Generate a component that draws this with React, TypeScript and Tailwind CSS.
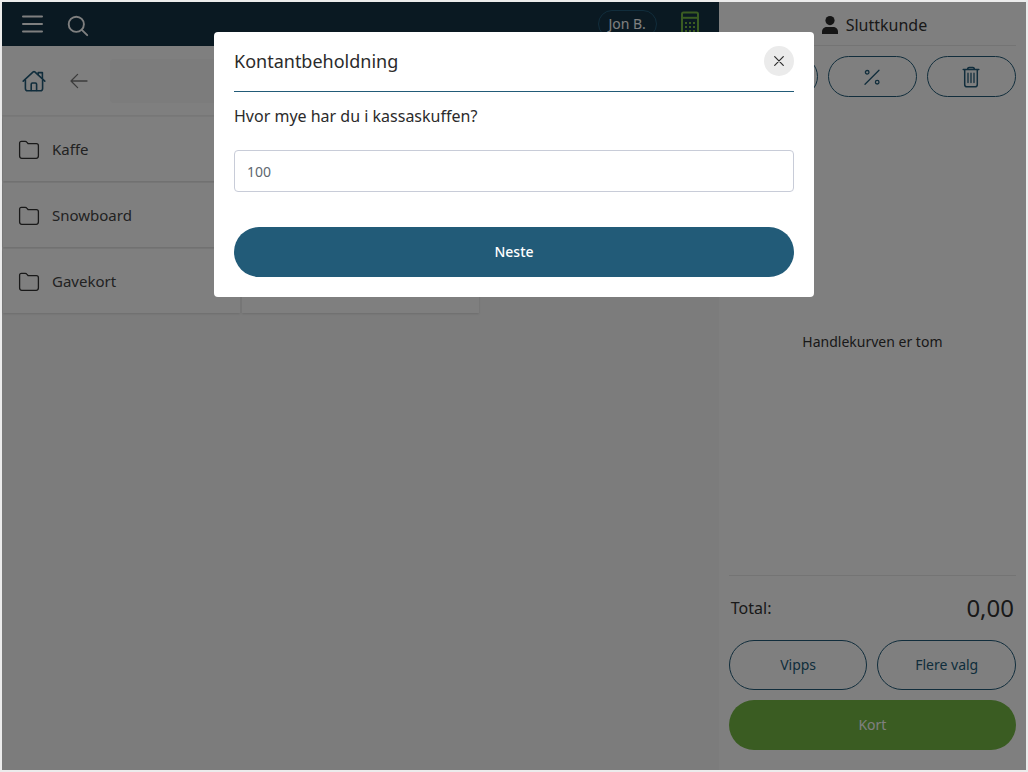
import { useState, type ReactNode } from 'react';

const folders = ['Kaffe', 'Snowboard', 'Gavekort'];

function FolderIcon() {
  return (
    <svg width="22" height="20" viewBox="0 0 22 20" fill="none" stroke="currentColor" strokeWidth="1.3" strokeLinejoin="round" aria-hidden="true">
      <path d="M1.6 3.2C1.6 2 2.2 1.4 3.4 1.4H7.3C8 1.4 8.4 1.6 8.8 2.1L10.2 3.7H18.4C19.8 3.7 20.4 4.4 20.4 5.7V15.8C20.4 17.5 19.7 18.3 18.2 18.3H3.8C2.3 18.3 1.6 17.5 1.6 15.8Z" />
    </svg>
  );
}

function HomeIcon() {
  return (
    <svg width="24" height="22" viewBox="0 0 24 22" fill="none" stroke="currentColor" strokeWidth="1.6" strokeLinecap="round" strokeLinejoin="round" aria-hidden="true">
      <path d="M1.2 11.2L11.2 1.9Q12 1.3 12.8 1.9L22.8 11.2" />
      <path d="M3.4 10V18.4Q3.4 20.7 5.6 20.7H18.4Q20.6 20.7 20.6 18.4V10" />
      <path d="M9.2 20.5V14.2Q9.2 13 10.4 13H13.4Q14.6 13 14.6 14.2V20.5" />
      <path d="M16.2 4.4V2.6H20.4V8.4" />
    </svg>
  );
}

function TrashIcon() {
  return (
    <svg width="18" height="22" viewBox="0 0 18 22" fill="none" stroke="currentColor" strokeWidth="1.5" strokeLinecap="round" strokeLinejoin="round" aria-hidden="true">
      <path d="M1.2 3.6H16.8M2.7 3.8V18.4Q2.7 20.8 5 20.8H13Q15.3 20.8 15.3 18.4V3.8M5.6 3.4Q5.6 1.5 7.2 1.5H10.8Q12.4 1.5 12.4 3.4" />
      <path d="M6 7.2V16.6M9 7.2V16.6M12 7.2V16.6" strokeWidth="1.3" />
    </svg>
  );
}

function PercentIcon() {
  return (
    <svg width="18" height="18" viewBox="0 0 18 18" fill="none" stroke="currentColor" strokeWidth="1.3" strokeLinecap="round" aria-hidden="true">
      <path d="M2 16.3L16 2.2" />
      <circle cx="4.2" cy="4.3" r="1.8" />
      <circle cx="14.2" cy="14.2" r="1.8" />
    </svg>
  );
}

function CalculatorIcon() {
  return (
    <svg width="18" height="26" viewBox="0 0 18 26" fill="none" stroke="currentColor" strokeWidth="2" aria-hidden="true">
      <rect x="1" y="1.5" width="16" height="23.5" rx="1.5" />
      <path d="M1 6.8H17" />
      <path d="M4 12H14.5M4 16H14.5M4 20H14.5" strokeDasharray="2 2" />
    </svg>
  );
}

function OutlineButton({ label, className, children }: { label?: string; className: string; children: ReactNode }) {
  return (
    <button type="button" aria-label={label} className={`flex items-center justify-center rounded-full border border-[#225b78] text-sm text-[#225b78] ${className}`}>
      {children}
    </button>
  );
}

function Catalog() {
  return (
    <main className="flex min-w-0 flex-1 flex-col bg-[#f8f8f8]">
      <header className="flex h-11 items-center bg-[#143244] pr-5 pl-5 text-white">
        <button type="button" aria-label="Meny">
          <svg width="21" height="20" viewBox="0 0 21 20" stroke="currentColor" strokeWidth="2" strokeLinecap="round" aria-hidden="true">
            <path d="M1 2.5H20M1 10H20M1 17.5H20" />
          </svg>
        </button>
        <button type="button" aria-label="Søk" className="mt-1 ml-6">
          <svg width="22" height="22" viewBox="0 0 22 22" fill="none" stroke="currentColor" strokeWidth="1.9" strokeLinecap="round" aria-hidden="true">
            <circle cx="9.3" cy="9.3" r="7.6" />
            <path d="M14.8 14.8L20.2 20.2" />
          </svg>
        </button>
        <button type="button" className="mr-6 ml-auto h-7 rounded-full border border-[#225b78] px-2.5 text-sm">Jon B.</button>
        <button type="button" aria-label="Kalkulator" className="text-[#74b844]">
          <CalculatorIcon />
        </button>
      </header>
      <div className="flex h-[69px] items-center bg-white pr-3 pl-5 shadow-[0_1px_2px_rgba(0,0,0,0.06)]">
        <button type="button" aria-label="Hjem" className="text-[#225b78]">
          <HomeIcon />
        </button>
        <button type="button" aria-label="Tilbake" className="ml-6 text-[#777777]">
          <svg width="18" height="16" viewBox="0 0 18 16" fill="none" stroke="currentColor" strokeWidth="1.3" strokeLinecap="round" strokeLinejoin="round" aria-hidden="true">
            <path d="M17 8H1M7.6 1.4L1 8L7.6 14.6" />
          </svg>
        </button>
        <input type="text" aria-label="Søk i katalog" className="ml-[22px] h-11 min-w-0 flex-1 rounded bg-[#f8f8f8]" />
      </div>
      <div className="mt-0.5 grid grid-cols-3 gap-0.5 px-px">
        {folders.map((name) => (
          <button key={name} type="button" className="col-start-1 flex h-16 items-center gap-3 bg-white pr-4 pl-[15px] text-left text-[15px] text-[#444444] shadow-[0_1px_2px_rgba(0,0,0,0.12)]">
            <span className="pt-0.5 text-[#333333]"><FolderIcon /></span>
            {name}
          </button>
        ))}
        <div className="col-start-2 row-start-3 bg-white shadow-[0_1px_2px_rgba(0,0,0,0.12)]" />
      </div>
    </main>
  );
}

function Cart() {
  return (
    <aside className="flex w-[30%] flex-col bg-white px-2.5 pb-5 text-[#333333]">
      <button type="button" className="flex h-11 items-center justify-center gap-2 border-b border-[#e8e8e8] pt-0.5 pl-1">
        <svg width="16" height="18" viewBox="0 0 16 18" fill="#2b2b2b" aria-hidden="true">
          <circle cx="8" cy="4.6" r="4.6" />
          <path d="M0 18V15.8C0 12.8 2.2 11 5 11H11C13.8 11 16 12.8 16 15.8V18Z" />
        </svg>
        Sluttkunde
      </button>
      <div className="mt-2.5 grid grid-cols-3 gap-2.5">
        <OutlineButton label="Kommentar" className="h-[41px]">{null}</OutlineButton>
        <OutlineButton label="Rabatt" className="h-[41px]"><PercentIcon /></OutlineButton>
        <OutlineButton label="Tøm" className="h-[41px]"><TrashIcon /></OutlineButton>
      </div>
      <div className="flex flex-1 items-center justify-center pt-3 text-sm">
        <p>Handlekurven er tom</p>
      </div>
      <div className="flex h-[65px] items-center justify-between border-t border-[#e8e8e8] px-0.5">
        <span>Total:</span>
        <span className="text-2xl">0,00</span>
      </div>
      <div className="grid grid-cols-2 gap-2.5">
        <OutlineButton className="h-[50px]">Vipps</OutlineButton>
        <OutlineButton className="h-[50px]">Flere valg</OutlineButton>
        <button type="button" className="col-span-2 h-[50px] rounded-full bg-[#74b844] text-sm text-white">Kort</button>
      </div>
    </aside>
  );
}

function CashDialog() {
  const [amount, setAmount] = useState('100');
  return (
    <div className="absolute inset-0 flex items-start justify-center bg-black/50 px-4 pt-[30px]">
      <section role="dialog" aria-modal="true" aria-labelledby="cash-title" className="w-full max-w-[600px] rounded bg-white px-5 pt-3.5 pb-5 text-[#2b2b2b]">
        <div className="flex items-center justify-between border-b border-[#225b78] pb-[15px]">
          <h1 id="cash-title" className="text-lg leading-6">Kontantbeholdning</h1>
          <button type="button" aria-label="Lukk" className="flex size-[30px] items-center justify-center rounded-full bg-[#ebebeb]">
            <svg width="10" height="10" viewBox="0 0 10 10" stroke="currentColor" strokeWidth="1.2" strokeLinecap="round" aria-hidden="true">
              <path d="M0.7 0.7L9.3 9.3M9.3 0.7L0.7 9.3" />
            </svg>
          </button>
        </div>
        <label htmlFor="cash-amount" className="mt-3 block">Hvor mye har du i kassaskuffen?</label>
        <input
          id="cash-amount"
          type="text"
          inputMode="decimal"
          value={amount}
          onChange={(event) => setAmount(event.target.value)}
          className="mt-[22px] block h-[42px] w-full rounded border border-[#c8ccd8] px-3 text-sm text-[#606770]"
        />
        <button type="button" className="mt-[35px] block h-[50px] w-full rounded-full bg-[#225b78] text-sm font-medium text-white">Neste</button>
      </section>
    </div>
  );
}

export default function App() {
  return (
    <div className="flex min-h-screen border-2 border-[#ececec] font-['Noto_Sans',sans-serif]">
      <div className="relative flex min-w-0 flex-1">
        <Catalog />
        <Cart />
        <CashDialog />
      </div>
    </div>
  );
}
